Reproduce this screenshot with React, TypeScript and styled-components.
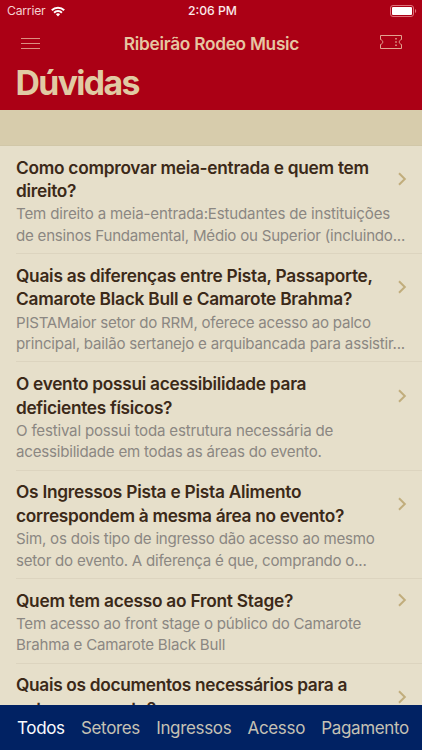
import React from "react";
import styled, { createGlobalStyle } from "styled-components";

const Global = createGlobalStyle`
  * { box-sizing: border-box; }
  body { margin: 0; font-family: Inter, "Liberation Sans", sans-serif; }
`;

const Screen = styled.div`
  width: 422px;
  height: 750px;
  display: flex;
  flex-direction: column;
  overflow: hidden;
  background: #e6dfca;
`;

const Header = styled.header`
  flex: none;
  height: 110px;
  background: #ab0015;
  color: #e6c6a2;
`;

const StatusBar = styled.div`
  height: 22px;
  display: grid;
  grid-template-columns: 1fr auto 1fr;
  align-items: center;
  padding: 0 5px 0 7px;
  color: #fbe9ea;
  font-size: 12.2px;
  line-height: 22px;
`;

const Carrier = styled.div`
  display: flex;
  align-items: center;
  gap: 6px;
  color: #f5d0d2;
  letter-spacing: -0.22px;
`;

const Clock = styled.div`
  font-weight: 500;
  padding-left: 1px;
`;

const BatterySlot = styled.div`
  display: flex;
  justify-content: flex-end;
`;

const NavBar = styled.div`
  height: 42px;
  display: grid;
  grid-template-columns: 40px 1fr 40px;
  align-items: center;
  padding: 0 19px 0 21px;
`;

const NavTitle = styled.div`
  padding: 0 1px 0 0;
  text-align: center;
  white-space: nowrap;
  font-size: 17.3px;
  font-weight: 600;
  letter-spacing: -0.28px;
`;

const IconButton = styled.button<{ $end?: boolean }>`
  display: flex;
  justify-content: ${(p) => (p.$end ? "flex-end" : "flex-start")};
  border: 0;
  padding: ${(p) => (p.$end ? "0 0 2px" : "0")};
  background: none;
  color: inherit;
`;

const LargeTitle = styled.h1`
  margin: 0;
  padding-left: 15.5px;
  color: #e1caa3;
  font-size: 33.8px;
  line-height: 38px;
  font-weight: 700;
  letter-spacing: -1.65px;
`;

const SectionBand = styled.div`
  flex: none;
  height: 36px;
  background: #d7ccac;
  border-bottom: 1px solid #d1c7a8;
`;

const List = styled.main`
  flex: 1;
  min-height: 0;
  overflow: hidden;
`;

const Item = styled.article`
  margin-left: 16px;
  padding: 9.8px 15px 6.8px 0;
  border-bottom: 1px solid #dcd4bf;
  white-space: nowrap;
`;

const ItemHead = styled.div`
  display: flex;
  align-items: center;
  justify-content: space-between;
`;

const Line = styled.div<{ $track: number }>`
  letter-spacing: ${(p) => p.$track}px;
`;

const Question = styled.h2`
  margin: 0;
  color: #3b2918;
  font-size: 17.3px;
  line-height: 23.4px;
  font-weight: 600;
`;

const Answer = styled.div`
  padding-top: 0.8px;
  color: #8b8782;
  font-size: 15.1px;
  line-height: 21.5px;
`;

const Tabs = styled.nav`
  flex: none;
  height: 45px;
  display: flex;
  align-items: center;
  justify-content: space-between;
  padding: 0 13px 0 17px;
  background: #012263;
`;

const Tab = styled.button<{ $active?: boolean }>`
  border: 0;
  padding: 0;
  background: none;
  font: 400 17px/24px Inter, sans-serif;
  letter-spacing: -0.34px;
  color: ${(p) => (p.$active ? "#fbfbfd" : "#c5c1b4")};
`;

type TextLine = [string, number];

const items: { q: TextLine[]; a: TextLine[] }[] = [
  {
    q: [["Como comprovar meia-entrada e quem tem", -0.27], ["direito?", -0.27]],
    a: [["Tem direito a meia-entrada:Estudantes de instituições", -0.17], ["de ensinos Fundamental, Médio ou Superior (incluindo...", -0.23]],
  },
  {
    q: [["Quais as diferenças entre Pista, Passaporte,", -0.25], ["Camarote Black Bull e Camarote Brahma?", -0.23]],
    a: [["PISTAMaior setor do RRM, oferece acesso ao palco", -0.25], ["principal, bailão sertanejo e arquibancada para assistir...", -0.21]],
  },
  {
    q: [["O evento possui acessibilidade para", -0.29], ["deficientes físicos?", -0.32]],
    a: [["O festival possui toda estrutura necessária de", -0.2], ["acessibilidade em todas as áreas do evento.", -0.22]],
  },
  {
    q: [["Os Ingressos Pista e Pista Alimento", -0.24], ["correspondem à mesma área no evento?", -0.3]],
    a: [["Sim, os dois tipo de ingresso dão acesso ao mesmo", -0.22], ["setor do evento. A diferença é que, comprando o...", -0.24]],
  },
  {
    q: [["Quem tem acesso ao Front Stage?", -0.24]],
    a: [["Tem acesso ao front stage o público do Camarote", -0.22], ["Brahma e Camarote Black Bull", -0.2]],
  },
  {
    q: [["Quais os documentos necessários para a", -0.31], ["entrar no evento?", -0.4]],
    a: [],
  },
];

const tabs = ["Todos", "Setores", "Ingressos", "Acesso", "Pagamento"];

const Wifi = () => (
  <svg width="14" height="11" viewBox="0 0 14 11" fill="none" stroke="#fff" strokeWidth="2">
    <path d="M.8 4.2a8.8 8.8 0 0 1 12.4 0M3.1 6.7a5.5 5.5 0 0 1 7.8 0" />
    <path d="M7 10.5 4.9 8.3a3 3 0 0 1 4.2 0z" fill="#fff" stroke="none" />
  </svg>
);

const Battery = () => (
  <svg width="27" height="12" viewBox="0 0 27 12" fill="none">
    <rect x=".5" y=".5" width="23" height="11" rx="2.5" stroke="#e0727b" />
    <rect x="2" y="2" width="20" height="8" rx="1" fill="#fff" />
    <path d="M25 4v4c1.6-.6 1.6-3.4 0-4z" fill="#e0727b" />
  </svg>
);

const Menu = () => (
  <svg width="20" height="13" viewBox="0 0 20 13" stroke="#dc8f80" strokeWidth="1">
    <path d="M0 1.5h19M0 6.5h19M0 11.5h19" />
  </svg>
);

const Ticket = () => (
  <svg width="24" height="14" viewBox="0 0 24 14" fill="none" stroke="#e2a38f" strokeWidth="1">
    <path d="M1.5.5h21v4c-3 .8-3 4.2 0 5v4h-21v-4c3-.8 3-4.2 0-5z" />
    <path d="M17 3v8.5" strokeWidth="1.5" strokeDasharray="1.5 1.8" />
  </svg>
);

const Chevron = () => (
  <svg width="9" height="14" viewBox="0 0 9 14" fill="none" stroke="#c1ad7c" strokeWidth="2">
    <path d="m1 1.3 5.8 5.7L1 12.7" />
  </svg>
);

export default function App() {
  return (
    <Screen>
      <Global />
      <Header>
        <StatusBar>
          <Carrier>Carrier <Wifi /></Carrier>
          <Clock>2:06 PM</Clock>
          <BatterySlot><Battery /></BatterySlot>
        </StatusBar>
        <NavBar>
          <IconButton aria-label="Menu"><Menu /></IconButton>
          <NavTitle>Ribeirão Rodeo Music</NavTitle>
          <IconButton $end aria-label="Ingressos"><Ticket /></IconButton>
        </NavBar>
        <LargeTitle>Dúvidas</LargeTitle>
      </Header>
      <SectionBand />
      <List>
        {items.map((item) => (
          <Item key={item.q[0][0]}>
            <ItemHead>
              <Question>
                {item.q.map(([t, s]) => <Line key={t} $track={s}>{t}</Line>)}
              </Question>
              <Chevron />
            </ItemHead>
            <Answer>
              {item.a.map(([t, s]) => <Line key={t} $track={s}>{t}</Line>)}
            </Answer>
          </Item>
        ))}
      </List>
      <Tabs>
        {tabs.map((t, i) => <Tab key={t} $active={i === 0}>{t}</Tab>)}
      </Tabs>
    </Screen>
  );
}
